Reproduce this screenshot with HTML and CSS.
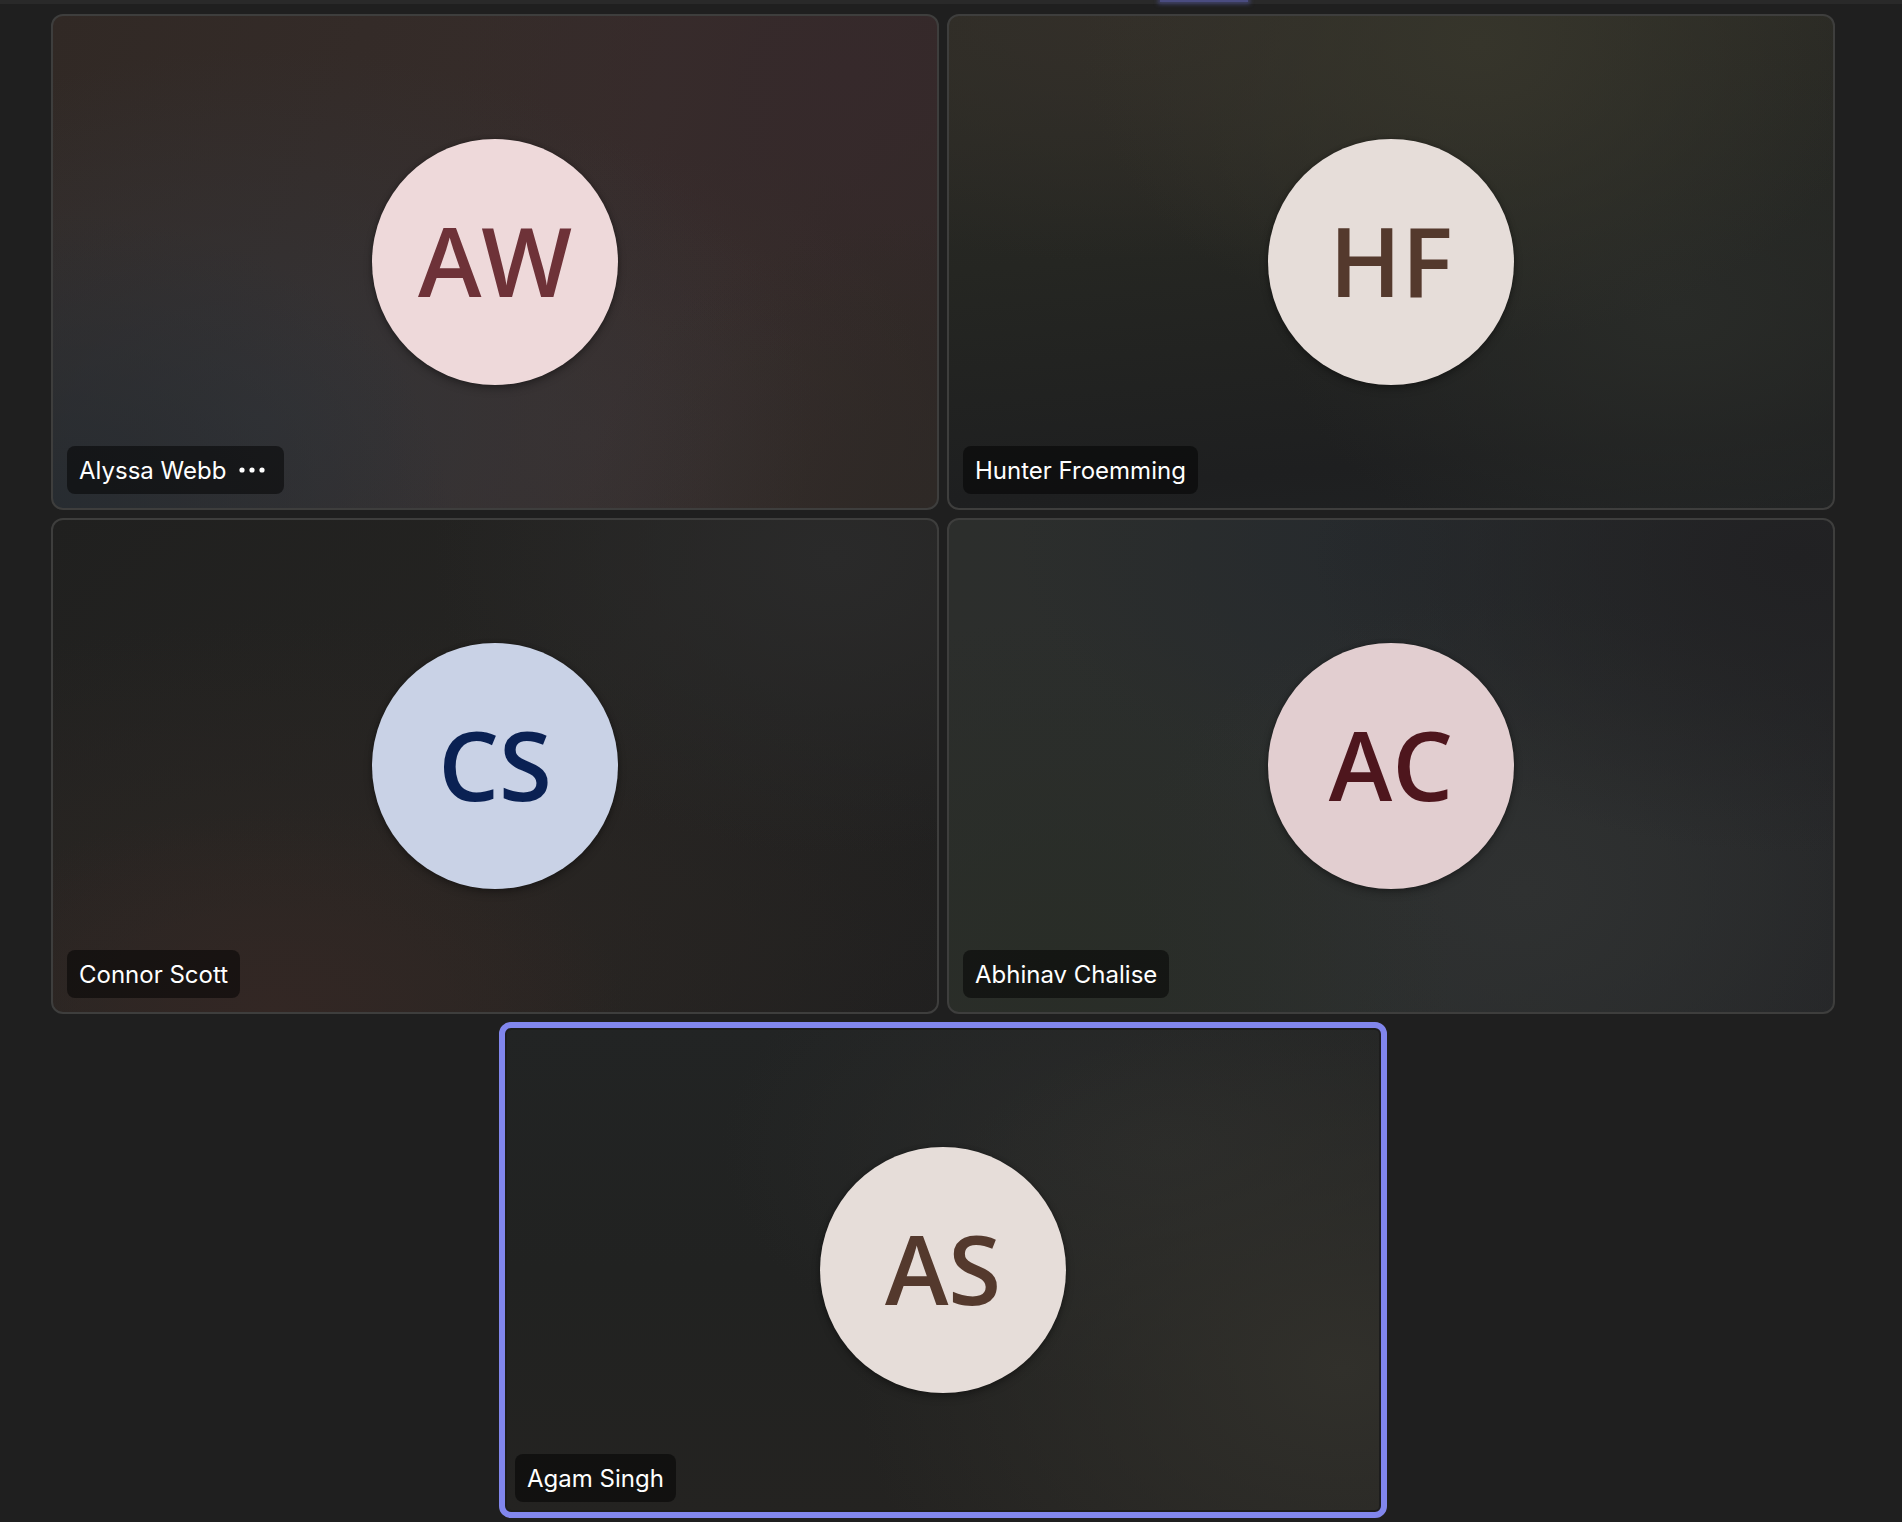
FILE: index.html
```html
<!DOCTYPE html>
<html lang="en">
<head>
<meta charset="utf-8">
<meta name="viewport" content="width=device-width, initial-scale=1">
<title>Meeting</title>
<link rel="stylesheet" href="styles.css">
</head>
<body>
<div class="toolbar"><span class="active-tab"></span></div>
<main class="gallery">
  <article class="tile tile-aw">
    <div class="avatar">AW</div>
    <div class="name">
      <span>Alyssa Webb</span>
      <button class="more" type="button" aria-label="More options">
        <svg width="40" height="24" viewBox="0 0 40 24" fill="currentColor" aria-hidden="true">
          <circle cx="10" cy="11" r="2.6"/><circle cx="20" cy="11" r="2.6"/><circle cx="30" cy="11" r="2.6"/>
        </svg>
      </button>
    </div>
  </article>
  <article class="tile tile-hf">
    <div class="avatar">HF</div>
    <div class="name"><span>Hunter Froemming</span></div>
  </article>
  <article class="tile tile-cs">
    <div class="avatar">CS</div>
    <div class="name"><span>Connor Scott</span></div>
  </article>
  <article class="tile tile-ac">
    <div class="avatar">AC</div>
    <div class="name"><span>Abhinav Chalise</span></div>
  </article>
  <article class="tile tile-as speaking">
    <div class="avatar">AS</div>
    <div class="name"><span>Agam Singh</span></div>
  </article>
</main>
</body>
</html>
```
FILE: styles.css
```css
* {
  box-sizing: border-box;
}

body {
  margin: 0;
  background: #1f1f1f;
  color: #fff;
  font-family: Inter, "Liberation Sans", sans-serif;
}

.toolbar {
  display: flex;
  height: 4px;
  padding-left: 61%;
  background: #292929;
}

.active-tab {
  width: 88px;
  height: 2px;
  background: #4a4c80;
  box-shadow: 0 0 4px 2px #41436c;
}

.gallery {
  display: grid;
  grid-template-columns: repeat(4, 1fr);
  gap: 8px;
  padding: 10px 67px 4px 51px;
}

/* The avatar and the name share one cell, so that they overlay. */
.tile {
  display: grid;
  grid-template: 100% / 100%;
  grid-column: span 2;
  aspect-ratio: 111 / 62;
  border: 2px solid #3e3e3d;
  border-radius: 12px;
  background-origin: border-box;
}

.tile-as {
  grid-column: 2 / span 2;
}

.avatar,
.name {
  grid-area: 1 / 1;
}

.avatar {
  display: grid;
  place-items: center;
  place-self: center;
  width: 246px;
  height: 246px;
  padding-bottom: 4px;
  border-radius: 50%;
  box-shadow: 0 4px 8px rgba(0, 0, 0, 0.28), 0 0 4px rgba(0, 0, 0, 0.24);
  font: 600 96px/1 "Open Sans", "Noto Sans", sans-serif;
}

.name {
  display: flex;
  align-items: center;
  gap: 6px;
  align-self: end;
  justify-self: start;
  height: 48px;
  margin: 14px;
  padding: 2px 12px 0;
  border-radius: 8px;
  background: rgba(0, 0, 0, 0.5);
  font-size: 24px;
  line-height: 32px;
  white-space: nowrap;
}

.more {
  display: flex;
  padding: 0;
  border: 0;
  background: none;
  color: inherit;
}

.tile-aw {
  background-color: #352c2b;
  background-image:
    radial-gradient(ellipse 45% 60% at 0% 100%, #272c31 0%, #272c3100 100%),
    radial-gradient(ellipse 62% 75% at 24% 82%, #343437 0%, #34343700 100%),
    radial-gradient(ellipse 40% 60% at 100% 100%, #2e2926 0%, #2e292600 100%),
    radial-gradient(ellipse 45% 60% at 90% 12%, #36292b 0%, #36292b00 100%),
    radial-gradient(ellipse 40% 60% at 60% 85%, #3b3130 0%, #3b313000 100%),
    linear-gradient(110deg, #312925 0%, #372d2b 60%, #302826 100%);
}

.tile-hf {
  background-color: #242622;
  background-image:
    radial-gradient(ellipse 45% 60% at 60% 6%, #36352b 0%, #36352b00 100%),
    radial-gradient(ellipse 60% 50% at 20% 0%, #332f29 0%, #332f2900 100%),
    radial-gradient(ellipse 45% 55% at 82% 60%, #292b28 0%, #292b2800 100%),
    linear-gradient(175deg, #2d2c26 0%, #252622 45%, #1e1f20 85%, #202223 100%);
}

.tile-cs {
  background-color: #242321;
  background-image:
    radial-gradient(ellipse 40% 42% at 25% 100%, #332724 0%, #33272400 100%),
    radial-gradient(ellipse 45% 60% at 88% 8%, #2a2a2a 0%, #2a2a2a00 100%),
    radial-gradient(ellipse 80% 70% at 30% 90%, #2b2623 0%, #2b262300 100%),
    linear-gradient(140deg, #20201f 0%, #252422 50%, #1f1f1f 100%);
}

.tile-ac {
  background-color: #2a2c2c;
  background-image:
    radial-gradient(ellipse 45% 70% at 12% 90%, #292d27 0%, #292d2700 100%),
    radial-gradient(ellipse 55% 60% at 96% 8%, #212123 0%, #21212300 100%),
    radial-gradient(ellipse 45% 60% at 65% 75%, #2f3131 0%, #2f313100 100%),
    radial-gradient(ellipse 40% 50% at 48% 6%, #262a2d 0%, #262a2d00 100%),
    linear-gradient(100deg, #2c2e2c 0%, #2b2e2e 50%, #252628 100%);
}

.tile-as {
  background-color: #242524;
  background-image:
    radial-gradient(ellipse 55% 75% at 95% 70%, #31302b 0%, #31302b00 100%),
    radial-gradient(ellipse 50% 50% at 75% 25%, #2a2b2a 0%, #2a2b2a00 100%),
    linear-gradient(180deg, #222424 0%, #212221 50%, #242321 100%);
}

.speaking {
  outline: 6px solid #8186ed;
  outline-offset: -6px;
  box-shadow: inset 0 0 0 6px #1d1d1d;
}

.tile-aw .avatar {
  background: #eed9da;
  color: #6e3238;
}

.tile-hf .avatar,
.tile-as .avatar {
  background: #e6ddd9;
  color: #54392d;
}

.tile-cs .avatar {
  background: #c9d2e6;
  color: #0a2153;
}

.tile-ac .avatar {
  background: #e2ced0;
  color: #4e161d;
}
```
